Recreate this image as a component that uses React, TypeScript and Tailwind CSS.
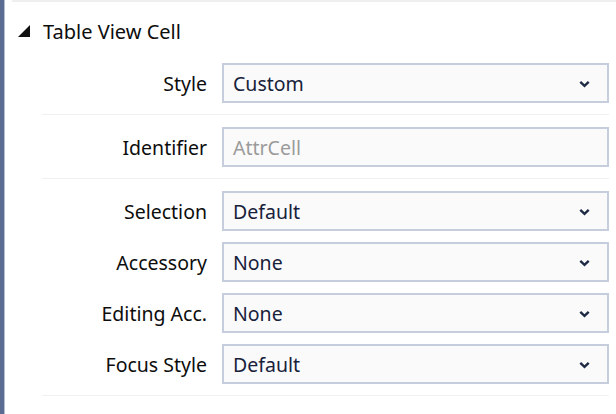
const font = { fontFamily: '"Noto Sans", "Open Sans", sans-serif' };

function Chevron() {
  return (
    <svg className="w-[11px] h-[8px] text-[#1e2a44] mt-[2px]" viewBox="0 0 11 8" fill="none">
      <path d="M1.3 1.8 L5.5 5.8 L9.7 1.8" stroke="currentColor" strokeWidth="2.4" />
    </svg>
  );
}

function Row({ label, value, select = true, placeholder = false }: { label: string; value: string; select?: boolean; placeholder?: boolean }) {
  return (
    <div className="flex items-center">
      <div className="w-[165px] text-right text-[19.5px] text-[#0d0d0d] pt-[2px]">{label}</div>
      <div className="ml-[15px] flex-1 h-[40px] border-2 border-[#c6cddd] bg-[#fafafa] flex items-center pl-[9px] pr-[17px]">
        <span className={`flex-1 text-[19.5px] pt-[2px] ${placeholder ? 'text-[#9b9b9b]' : 'text-[#18213a]'}`}>{value}</span>
        {select && <Chevron />}
      </div>
    </div>
  );
}

export default function App() {
  return (
    <div className="w-[616px] h-[414px] bg-white flex overflow-hidden" style={font}>
      <div className="w-[4px] bg-[#5a6c92]" />
      <div className="w-px bg-[#b7c0d2]" />
      <div className="flex-1 flex flex-col">
        <div className="h-[2px] ml-[7px] bg-[#efefef]" />
        {/* Header */}
        <div className="h-[44px] mt-[7px] flex items-center pl-[13px]">
          <svg className="w-[12px] h-[12px]" viewBox="0 0 12 12">
            <polygon points="12,0 12,12 0,12" fill="#111" />
          </svg>
          <span className="ml-[13px] text-[20px] text-[#0d0d0d] pt-[2px]">Table View Cell</span>
        </div>

        <div className="ml-[37px] mr-[7px] flex flex-col">
          <div className="pt-[10px] pb-[11px] border-b border-[#f1f1f1]">
            <Row label="Style" value="Custom" />
          </div>
          <div className="pt-[12px] pb-[11px] border-b border-[#f1f1f1]">
            <Row label="Identifier" value="AttrCell" select={false} placeholder />
          </div>
          <div className="pt-[12px] pb-[11px] border-b border-[#f1f1f1] flex flex-col gap-[11px]">
            <Row label="Selection" value="Default" />
            <Row label="Accessory" value="None" />
            <Row label="Editing Acc." value="None" />
            <Row label="Focus Style" value="Default" />
          </div>
        </div>
      </div>
    </div>
  );
}
